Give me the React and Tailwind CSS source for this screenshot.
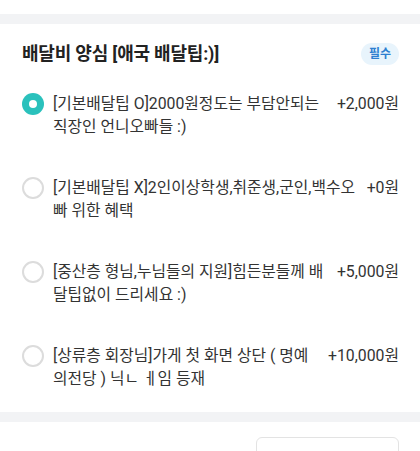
import { useState } from 'react'

const options = [
  { id: 1, lines: ['[기본배달팁 O]2000원정도는 부담안되는', '직장인 언니오빠들 :)'], price: '+2,000원' },
  { id: 2, lines: ['[기본배달팁 X]2인이상학생,취준생,군인,백수오', '빠 위한 혜택'], price: '+0원' },
  { id: 3, lines: ['[중산층 형님,누님들의 지원]힘든분들께 배', '달팁없이 드리세요 :)'], price: '+5,000원' },
  { id: 4, lines: ['[상류층 회장님]가게 첫 화면 상단 ( 명예', '의전당 ) 닉ㄴ ㅔ임 등재'], price: '+10,000원' },
]

function Radio({ checked }) {
  return checked ? (
    <span className="flex h-[22px] w-[22px] shrink-0 items-center justify-center rounded-full bg-[#2ac1bc]">
      <span className="block h-[8px] w-[8px] rounded-full bg-white" />
    </span>
  ) : (
    <span className="block h-[22px] w-[22px] shrink-0 rounded-full border-2 border-[#dcdcdc] bg-white" />
  )
}

export default function App() {
  const [selected, setSelected] = useState(1)

  return (
    <div className="min-h-[451px] bg-white font-['Roboto','Noto_Sans_CJK_KR',sans-serif] text-[#333]">
      <div className="h-[14px]" />
      <div className="h-[10px] bg-[#f2f3f5]" />

      <section className="pl-[22px] pr-[21px] pt-[19px] pb-[22px]">
        <div className="flex items-center justify-between">
          <h2 className="text-[18px] font-bold leading-[22px] tracking-[-0.2px] text-[#222]">
            배달비 양심 [애국 배달팁:)]
          </h2>
          <span className="flex h-[22px] items-center rounded-full bg-[#e8f4fc] px-[8px] text-[12px] font-bold text-[#2d7fd0]">
            필수
          </span>
        </div>

        <div className="mt-[27px] flex flex-col gap-[38px]">
          {options.map((o) => (
            <label
              key={o.id}
              onClick={() => setSelected(o.id)}
              className="flex cursor-pointer items-start"
            >
              <span className="mt-[1px] block shrink-0">
                <Radio checked={selected === o.id} />
              </span>
              <span className="ml-[9px] flex min-w-0 flex-1 flex-col text-[15.8px] leading-[23px]">
                {o.lines.map((l) => (
                  <span key={l} className="whitespace-nowrap">{l}</span>
                ))}
              </span>
              <span className="ml-[8px] shrink-0 text-[15.8px] leading-[23px]">{o.price}</span>
            </label>
          ))}
        </div>
      </section>

      <div className="h-[10px] bg-[#f2f3f5]" />

      <div className="flex items-start justify-between pl-[22px] pr-[21px] pt-[15px]">
        <span className="mt-[15px] text-[17px] font-bold leading-[22px] text-[#222]">수량</span>
        <div className="h-[42px] w-[143px] rounded-[6px] border border-[#e3e3e3]" />
      </div>
    </div>
  )
}
